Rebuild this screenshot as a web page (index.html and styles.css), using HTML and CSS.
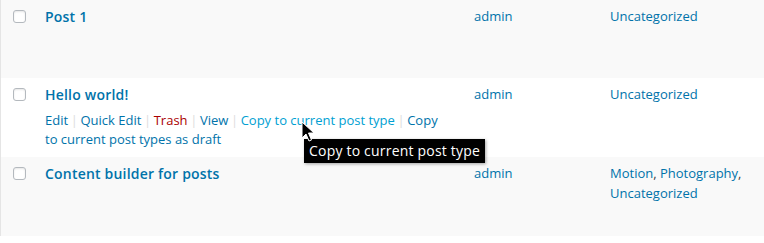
FILE: index.html
```html
<!DOCTYPE html>
<html lang="en">
  <head>
    <meta charset="UTF-8">
    <title>Posts</title>
    <link rel="stylesheet" href="styles.css">
  </head>
  <body>
    <div class="post-list">
      <div class="post-row alt">
        <div class="col-check"><input type="checkbox" class="cb"></div>
        <div class="col-title"><a class="row-title" href="#">Post 1</a></div>
        <div class="col-author"><a href="#">admin</a></div>
        <div class="col-cats"><a href="#">Uncategorized</a></div>
      </div>
      <div class="post-row">
        <div class="col-check"><input type="checkbox" class="cb"></div>
        <div class="col-title">
          <a class="row-title" href="#">Hello world!</a>
          <div class="row-actions">
            <a href="#">Edit</a> <span class="sep">|</span> <a href="#">Quick Edit</a> <span class="sep">|</span> <a href="#" class="trash">Trash</a> <span class="sep">|</span> <a href="#">View</a> <span class="sep">|</span> <a href="#" class="hover">Copy to current post type</a> <span class="sep">|</span> <a href="#">Copy to current post types as draft</a>
          </div>
        </div>
        <div class="col-author"><a href="#">admin</a></div>
        <div class="col-cats"><a href="#">Uncategorized</a></div>
      </div>
      <div class="post-row alt">
        <div class="col-check"><input type="checkbox" class="cb"></div>
        <div class="col-title"><a class="row-title" href="#">Content builder for posts</a></div>
        <div class="col-author"><a href="#">admin</a></div>
        <div class="col-cats"><a href="#">Motion</a>, <a href="#">Photography</a>, <a href="#">Uncategorized</a></div>
      </div>
    </div>
    <div class="tooltip">Copy to current post type</div>
    <svg class="cursor" width="14" height="22" viewBox="0 0 14 22">
      <path d="M1 1 L1 17 L5 13 L8 20 L10.5 19 L7.5 12 L13 12 Z" fill="#000" stroke="#fff" stroke-width="1" stroke-linejoin="round"/>
    </svg>
  </body>
</html>
```

FILE: styles.css
```css
html, body { margin: 0; background: #fff; }
body { font-family: "Open Sans", "Liberation Sans", sans-serif; font-size: 13px; color: #444; }
a { text-decoration: none; color: #0073aa; }
.post-list { border-left: 1px solid #e5e5e5; }
.post-row { display: grid; grid-template-columns: 34px 429px 136px 1fr; height: 79px; background: #fff; line-height: 19.5px; }
.post-row:first-child { height: 78px; }
.post-row.alt { background: #f9f9f9; }
.col-check { padding: 10px 0 0 12px; }
.col-title, .col-author, .col-cats { padding: 7px 10px 0; }
.col-title { padding-right: 20px; }
.cb { appearance: none; -webkit-appearance: none; display: block; margin: 0; width: 13px; height: 13px; border: 1px solid #b4b9be; border-radius: 3px; background: #fff; box-shadow: inset 0 1px 2px rgba(0,0,0,.1); box-sizing: border-box; }
.row-title { font-size: 14px; font-weight: 600; letter-spacing: 0.2px; }
.row-actions { padding-top: 5px; }
.row-actions .sep { color: #ddd; margin: 0 -0.8px; }
.row-actions .trash { color: #a00; }
.row-actions .hover { color: #00a0d2; }
.tooltip { position: absolute; left: 304px; top: 139px; height: 24px; padding: 0 5px; line-height: 24px; background: #000; color: #fff; font-size: 14px; letter-spacing: 0.2px; font-family: "Open Sans", "DejaVu Sans", sans-serif; box-shadow: 1px 1px 3px rgba(0,0,0,.35); }
.cursor { position: absolute; left: 301px; top: 121px; }
```
